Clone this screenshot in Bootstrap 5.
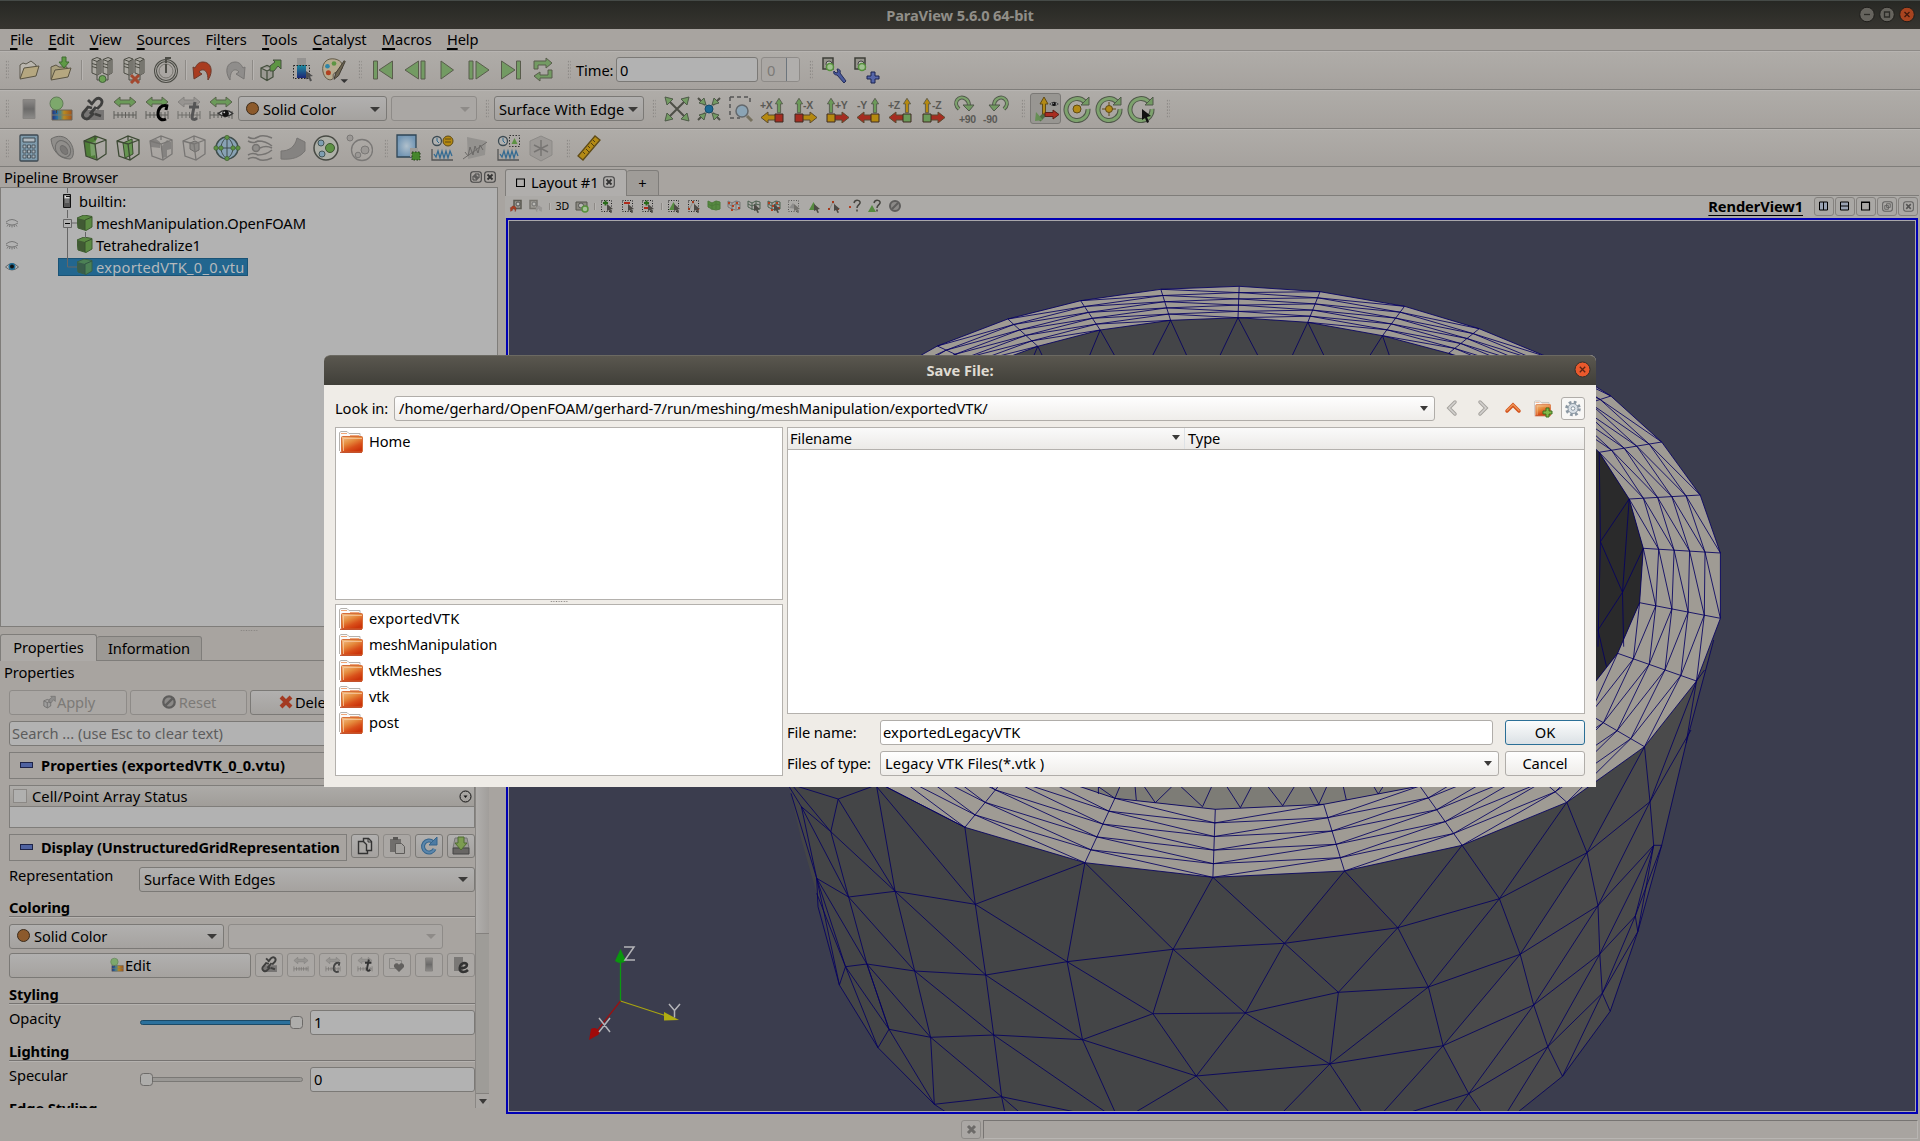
<!DOCTYPE html>
<html lang="en">
<head>
<meta charset="utf-8">
<title>ParaView 5.6.0 64-bit</title>
<link rel="stylesheet" href="https://cdn.jsdelivr.net/npm/bootstrap@5.3.0/dist/css/bootstrap.min.css">
<script src="https://cdn.jsdelivr.net/npm/bootstrap@5.3.0/dist/js/bootstrap.bundle.min.js"></script>
<style>
:root{--bg:#a8a4a0;--ln:#7f7d7a;--base:#b2b2b2}
html,body{width:1920px;height:1141px;overflow:hidden}
body{font:14.67px/20px "Noto Sans","Open Sans",sans-serif;letter-spacing:-.08px;color:#000;background:var(--bg);white-space:nowrap}
svg{display:block;flex:none}
b,.fb{font-weight:700;letter-spacing:-.1px}
.titlebar{height:29px;background:linear-gradient(#272824,#373530);border-top:1px solid #454a47;color:#908e88;font-weight:700;letter-spacing:-.13px;padding-bottom:1px}
.winbtns{right:5px;top:5px;gap:4px}
.menus{height:22px;padding:0 0 2px 10px;gap:15.3px;border-bottom:1px solid #8d8a87}
.menus u{text-underline-offset:3px;text-decoration-thickness:1.5px}
.tbar{height:39px;padding-bottom:2px;background:linear-gradient(#afaca8,#a6a29e);border-bottom:1px solid var(--ln);border-top:1px solid #b7b4b1}
.r3{padding-bottom:0}
.cell{width:32px;display:flex;justify-content:center;align-items:center;flex:none}
.r3 .cell{width:33.05px}
.ic{width:28px;height:28px}
.grip{width:4px;height:19px;flex:none;background-image:radial-gradient(circle,#85827f 0.7px,transparent .9px);background-size:2.6px 3.2px}
.vsep{width:1px;height:20px;background:#8d8a86;box-shadow:1px 0 #b8b5b2;flex:none}
.ctl{height:25px;border:1px solid #7b7976;border-radius:3px;background:linear-gradient(#b1b0af,#a5a29f);display:flex;align-items:center;flex:none;overflow:hidden}
.ctl.off{border-color:#8e8b88;color:#7c7a77;background:#aaa7a4}
.fld{background:var(--base)}
.dock .ctl,.dlg .ctl{padding-bottom:2px}
.dock .ctl.sq{padding-bottom:0}
.arr{border:5px solid transparent;border-top:5px solid #3b3a39;border-bottom:0;width:0;height:0;margin-left:auto;margin-right:6px;flex:none;position:relative;top:1px}
.off .arr{border-top-color:#8e8b88;}
.dot{width:13px;height:13px;border-radius:50%;background:#8c5a2c;border:1px solid #3c2b1a;flex:none}
.dock{width:505px;flex:none}
.treebox{width:498px;height:440px;padding-top:2px;background:var(--base);border:1px solid var(--ln)}
.trow{height:22px;display:flex;align-items:center}
.selrow{background:#22668f;border:1px solid #1a5376;color:#b5b9bc;height:18px;display:flex;align-items:center;letter-spacing:.26px}
.tabx{border:1px solid var(--ln);border-bottom:0;border-radius:3px 3px 0 0;display:flex;align-items:center;padding-bottom:1px}
.props{width:489px;height:356px;overflow:hidden;margin-top:6px}
.pcol{width:466px;margin-left:9px}
.grp{height:27px;border:1px solid var(--ln);display:flex;align-items:center;padding:0 0 1px 10px;overflow:hidden}
.minus{width:13px;height:6px;background:#4f62a0;border:1px solid #1d2347;flex:none;margin-right:8px}
.hline{border-bottom:1px solid #777472;box-shadow:0 1px #b5b2af;height:18px;line-height:17px}
.sq{width:28px;height:24px;justify-content:center}
.sq svg{width:22px;height:22px}
.sb{width:14px;background:#9e9c98;border-left:1px solid #8a8784}
.vt{height:22px;background:#acaaa7}
.vt .vc{width:20.1px;display:flex;justify-content:center;flex:none}
.vt .vc svg{width:14px;height:14px}
.vb{width:20px;height:19px;border:1px solid #85827f;border-radius:3px;display:flex;align-items:center;justify-content:center;background:#aaa8a5}
.view{border:2px solid #0000b4;height:896px}
.view>div{border:1px solid #a9a7aa;height:892px;background:#3b3d4e}
.dlg{position:absolute;left:324px;top:355px;width:1272px;height:432px;background:#efece7;border-radius:6px 6px 0 0}
.dlgt{height:30px;border-radius:6px 6px 0 0;background:linear-gradient(#5a574f,#403f39);border-top:1px solid #6b6962;color:#dfdbd2;font-weight:700;padding-bottom:2px;letter-spacing:-.05px}
.dlg .ctl{border-color:#b0ada9;background:linear-gradient(#fefefe,#efedea)}
.dlg .ctl.fld{background:#fff}
.dlg .ctl.okb{border-color:#2b6f96;background:linear-gradient(#fbfcfc,#dbe1e5)}
.pane{background:#fff;border:1px solid #b4b1ad}
.pane .it{height:26px;display:flex;align-items:center;padding-left:3px;gap:6px}
.it span{padding-bottom:3px}
.thead{height:22px;background:linear-gradient(#fafafa,#eceae7);border-bottom:1px solid #b4b1ad}
.axi text{font:bold 10.500px "Liberation Sans",sans-serif;fill:#5a5955;letter-spacing:-.3px}
</style>
</head>
<body class="d-flex flex-column">
<svg width="0" height="0" class="position-absolute">
<defs>
<linearGradient id="gf" x1="0" y1="0" x2=".6" y2="1"><stop offset="0" stop-color="#f3c48c"/><stop offset=".45" stop-color="#e58a3c"/><stop offset=".75" stop-color="#d9501a"/><stop offset="1" stop-color="#cc350b"/></linearGradient>
<linearGradient id="rb"><stop offset="0" stop-color="#23307e"/><stop offset=".35" stop-color="#2a82a8"/><stop offset=".6" stop-color="#b98a20"/><stop offset="1" stop-color="#a3521c"/></linearGradient>
<linearGradient id="rv" x2="0" y2="1"><stop offset="0" stop-color="#1f8da0"/><stop offset="1" stop-color="#1b2675"/></linearGradient>
<linearGradient id="gy" x2="0" y2="1"><stop offset="0" stop-color="#8d8b89"/><stop offset=".5" stop-color="#6b6a69"/><stop offset="1" stop-color="#8d8b89"/></linearGradient>
<radialGradient id="bl"><stop offset="0" stop-color="#b0c0cc"/><stop offset="1" stop-color="#7396b4"/></radialGradient>
<symbol id="open" viewBox="0 0 28 28"><path d="M5 22V9l3-2 3 1 5-3 5 4v3" fill="#bab6ae" stroke="#5a574c"/><path d="M5 23 9 12l15-2-3 10z" fill="#b5a780" stroke="#5a5442"/></symbol>
<symbol id="save" viewBox="0 0 28 28"><path d="M4 23V11l5-2 3 2h8v3" fill="#a9a07e" stroke="#5a5442"/><path d="M4 24 8 14l16-2-3 9z" fill="#b5a780" stroke="#5a5442"/><path d="M15 1h4v5h3l-5 6-5-6h3z" fill="#5f9a45" stroke="#3f6a30"/></symbol>
<symbol id="srv" viewBox="0 0 28 28"><path d="M4 3.500l5-2 4 1.500v14l-4 2-5-2zM15 3.500l5-2 4 1.500v14l-4 2-5-2z" fill="#aba9a2" stroke="#4c4c44"/><path d="M9 5.500v13M20 5.500v13" stroke="#4c4c44"/><path d="M9 5.500l4-2.500v14l-4 2zM20 5.500l4-2.500v14l-4 2z" fill="#77766f"/><path d="M4 7.500l5 1.500M4 10.500l5 1.500M15 7.500l5 1.500M15 10.500l5 1.500M9 19v5h11v-5M4 3.500l5 2 4-2.500M15 3.500l5 2 4-2.500" fill="none" stroke="#4c4c44"/></symbol>
<symbol id="conn" viewBox="0 0 28 28"><use href="#srv"/><circle cx="14.500" cy="23" r="3.500" fill="#6ba152" stroke="#41603a"/></symbol>
<symbol id="disc" viewBox="0 0 28 28"><use href="#srv"/><path d="M11 19l8 8M19 19l-8 8" stroke="#a3482f" stroke-width="3"/></symbol>
<symbol id="auto" viewBox="0 0 28 28" fill="none" stroke="#4d4d47"><circle cx="14" cy="15" r="10.500" stroke-width="3"/><circle cx="14" cy="15" r="10.500" stroke="#a9a7a2"/><circle cx="14" cy="15" r="7" stroke="#77756f"/><path d="M14 17V8M14 1v6M14 2h5" stroke-width="2"/></symbol>
<symbol id="undo" viewBox="0 0 28 28"><path d="M4 11l1 12 8-5-3-2c3-4 9-3 9 8 6-9 3-18-5-18-4 0-6 2-8 6z" fill="#a93c20" stroke="#6d3a2c"/></symbol>
<symbol id="redo" viewBox="0 0 28 28"><path d="M24 11l-1 12-8-5 3-2c-3-4-9-3-9 8-6-9-3-18 5-18 4 0 6 2 8 6z" fill="#8f8d8b" stroke="#787674"/></symbol>
<symbol id="apply" viewBox="0 0 28 28"><path d="M5 12l6-2.500 6 2.500v9l-6 3.500L5 21zM5 12l6 3 6-3M11 15v9" fill="#9a9992" stroke="#45503e" stroke-width="1.300"/><path d="M14 15V10l5-4-2-2h8v9l-3-3-4 5z" fill="#5d9543" stroke="#45503e"/></symbol>
<symbol id="pick" viewBox="0 0 28 28"><path d="M9 2h9v7H9z" fill="#959391"/><path d="M9 9h9v13H9z" fill="url(#rv)"/><path d="M5.500 9.500h16v13h-16z" fill="none" stroke="#222" stroke-dasharray="1.500 1.500"/><path d="M18 15l7 5-3 .5 2 4-2 1-1.500-4-2.500 2z" fill="#505050"/></symbol>
<symbol id="pal" viewBox="0 0 30 28"><path d="M13 2C6 2 2 8 3 15s6 11 10 9c3-2-1-5 3-7s8-2 8-7-5-8-11-8z" fill="#b7ab90" stroke="#5a5340"/><circle cx="8" cy="10" r="2.500" fill="#2e86a8"/><circle cx="15" cy="7" r="2.500" fill="#5d9543"/><circle cx="9" cy="17" r="2.700" fill="#b1401f"/><path d="M26 4 17 17l-2 7 5-4 7-15z" fill="#6d6450" stroke="#3c382f"/><path d="M22 24h8l-4 4z" fill="#333"/></symbol>
<symbol id="first" viewBox="0 0 28 28"><g fill="#739b63" stroke="#595c4c"><path d="M4.500 5h4v18h-4zM23.500 5v18L10 14z"/></g></symbol>
<symbol id="prev" viewBox="0 0 28 28"><g fill="#739b63" stroke="#595c4c"><path d="M20 5h4v18h-4zM17.500 5v18L4 14z"/></g></symbol>
<symbol id="play" viewBox="0 0 28 28"><path d="M8 5v18l12.500-9z" fill="#739b63" stroke="#595c4c"/></symbol>
<symbol id="next" viewBox="0 0 28 28"><g fill="#739b63" stroke="#595c4c"><path d="M4 5h4v18H4zM11 5v18l13-9z"/></g></symbol>
<symbol id="last" viewBox="0 0 28 28"><g fill="#739b63" stroke="#595c4c"><path d="M19.500 5h4v18h-4zM4.500 5v18L18 14z"/></g></symbol>
<symbol id="loop" viewBox="0 0 28 28"><path d="M5 13V5h12V2l6 5-6 5V9H9v4zM23 14v8H11v3l-6-5 6-4v3h8v-5z" fill="#739b63" stroke="#595c4c"/></symbol>
<symbol id="cam" viewBox="0 0 28 28"><path d="M3 2h10v11H3z" fill="#96948c" stroke="#3e3f38" stroke-width="1.500"/><circle cx="9" cy="8" r="3" fill="#c0c0bb" stroke="#444"/><circle cx="10" cy="11" r="3.500" fill="#9fc090" stroke="#56903c" stroke-width="1.500"/></symbol>
<symbol id="camw" viewBox="0 0 28 28"><use href="#cam"/><path d="M14 15c-1 3 1 4 3 4l7 8 2-2-6-8c1-3-1-4-3-4l1 3-2 1z" fill="#4a5a9c" stroke="#242c58"/></symbol>
<symbol id="camp" viewBox="0 0 28 28"><use href="#cam"/><path d="M19 16h4v4h4v3h-4v4h-4v-4h-4v-3h4z" fill="#5666a8" stroke="#1b2250"/></symbol>
<symbol id="camg" viewBox="0 0 14 14"><path d="M5 1.500h7v8H5z" fill="#96948c" stroke="#5b5a52" stroke-width="1.500"/><circle cx="9" cy="5" r="2" fill="#c0c0bb" stroke="#555"/></symbol>
<symbol id="bar" viewBox="0 0 28 28"><path d="M8 2.500h12v23H8z" fill="url(#gy)" stroke="#858380"/></symbol>
<symbol id="cmap" viewBox="0 0 28 28"><path d="M5 15h20v10H5z" fill="url(#rb)" stroke="#6a6558"/><path d="M5 20h20M12 15v10" stroke="#807b60"/><circle cx="9.500" cy="8.500" r="6.500" fill="#7da86c" stroke="#5f7c55"/><path d="M9.500 15v3" stroke="#444"/></symbol>
<symbol id="chain" viewBox="0 0 28 28"><path d="M5 15h20v10H5z" fill="#777574"/><path d="M12 10 16 5c4-4 9 0 6 5l-4 4M13 13l-4-1-5 6c-2 5 4 8 7 4l4-4M11 19l6-7M9 5l3 3M16 19l6 2" fill="none" stroke="#3f3f3e" stroke-width="2.800"/></symbol>
<symbol id="rul" viewBox="0 0 28 28"><path d="M3 20h22M3 16v8M7 17v6M11 17v6M14.500 17v6M18 17v6M22 17v6M25 16v8" stroke="#5f5e5a" fill="none"/></symbol>
<symbol id="resc" viewBox="0 0 28 28"><use href="#rul"/><path d="M3 7l6-5v3h10V2l6 5-6 5V9H9v3z" fill="#6b9a59" stroke="#59634c"/></symbol>
<symbol id="rescg" viewBox="0 0 28 28" opacity=".75"><use href="#rul"/><path d="M3 7l6-5v3h10V2l6 5-6 5V9H9v3z" fill="#908e8b" stroke="#777573"/></symbol>
<symbol id="cC" viewBox="0 0 28 28"><path d="M25 11c-7-2-10 3-10 8s4 7 8 5M24 10l-1 5" fill="none" stroke="currentColor" stroke-width="3"/></symbol>
<symbol id="cT" viewBox="0 0 28 28"><path d="M20 7l-3 15c0 3 3 3 5 1M14 12h10" fill="none" stroke="currentColor" stroke-width="3"/></symbol>
<symbol id="eye" viewBox="0 0 28 28"><path d="M2 14q12-10 24 0-12 9-24 0z" fill="#b8b8b8" stroke="#333" stroke-width="2"/><circle cx="14" cy="14" r="5.500" fill="#111"/><circle cx="12" cy="12" r="1.500" fill="#ccc"/></symbol>
<symbol id="fit" viewBox="0 0 28 28"><path d="M5 5l18 18M23 5 5 23" stroke="#4e4f47" stroke-width="2"/><path d="M2 2l8 2-6 6zM26 2l-8 2 6 6zM2 26l8-2-6-6zM26 26l-8-2 6-6z" fill="#739b63" stroke="#4e5a48"/></symbol>
<symbol id="fitd" viewBox="0 0 28 28"><path d="M3 3l7 7M25 3l-7 7M3 25l7-7M25 25l-7-7" stroke="#4e4f47" stroke-width="2"/><path d="M11 10l-7-2 5-5zM17 10l7-2-5-5zM11 18l-7 2 5 5zM17 18l7 2-5 5z" fill="#739b63" stroke="#4e5a48"/><circle cx="14" cy="14" r="4" fill="#1c6a96" stroke="#154b69"/></symbol>
<symbol id="zoomb" viewBox="0 0 28 28"><path d="M3 2v21h10M3 2h20v8" fill="none" stroke="#555" stroke-width="1.500" stroke-dasharray="4 3"/><circle cx="15" cy="16" r="6" fill="#8ba4b5" stroke="#63686c" stroke-width="1.500"/><path d="M20 21l5 5" stroke="#77715f" stroke-width="3"/></symbol>
<symbol id="arU" viewBox="0 0 10 20"><path d="M3 19V8H.5L5 1l4.500 7H7v11z" fill="currentColor" stroke="#4f5147"/></symbol>
<symbol id="axL" viewBox="0 0 28 28"><use href="#arU" x="16" y="1" width="8" height="19" style="color:var(--u)"/><path d="M17 20H9v-3l-7 5.500L9 28v-3h8z" fill="var(--h)" stroke="#5b4a30"/><path d="M16 19h8v8h-8z" fill="var(--q)" stroke="#3e2b20"/></symbol>
<symbol id="axR" viewBox="0 0 28 28"><use href="#arU" x="4" y="1" width="8" height="19" style="color:var(--u)"/><path d="M11 20h8v-3l7 5.500-7 5.500v-3h-8z" fill="var(--h)" stroke="#5b4a30"/><path d="M4 19h8v8H4z" fill="var(--q)" stroke="#3e2b20"/></symbol>
<symbol id="rotp" viewBox="0 0 28 28"><path d="M8 14C1 8 8-1 15 4c3 2 3 4 3 7" fill="none" stroke="#50584a" stroke-width="4"/><path d="M8 14C1 8 8-1 15 4c3 2 3 4 3 7" fill="none" stroke="#7da26d" stroke-width="2.200"/><path d="M12 10h11l-5 6z" fill="#739b63" stroke="#50584a"/></symbol>
<symbol id="calc" viewBox="0 0 28 28"><rect x="5" y="1" width="18" height="26" rx="1" fill="#7f9bac" stroke="#3f4a52" stroke-width="1.300"/><path d="M8 4h12v4H8z" fill="#b2bac0" stroke="#3f4a52"/><path d="M8 11h3v3H8zM12.500 11h3v3h-3zM17 11h3v3h-3zM8 16h3v3H8zM12.500 16h3v3h-3zM17 16h3v3h-3zM8 21h3v3H8zM12.500 21h3v3h-3zM17 21h3v3h-3z" fill="#a9b4bb" stroke="#3f4a52" stroke-width=".8"/></symbol>
<symbol id="cont" viewBox="0 0 28 28" fill="none" stroke="#6d6c6a"><path d="M3 5c6-4 14-4 19 3s4 16 0 17C10 25 4 15 3 5z" fill="#908e8b"/><ellipse cx="15" cy="15" rx="7" ry="9" transform="rotate(-35 15 15)"/><ellipse cx="16" cy="16" rx="3" ry="5" fill="#7a7876" transform="rotate(-35 16 16)"/></symbol>
<symbol id="cube" viewBox="0 0 28 28"><path d="M3 7l11-5 11 4v14l-9 6L5 22zM3 7l11 3 11-4M16 26l-2-16M14 2v4" fill="none" stroke="currentColor" stroke-width="1.300"/></symbol>
<symbol id="clip" viewBox="0 0 28 28"><path d="M3 7l11-5 3 1-4 7 2 15-10-3z" fill="#4f7f38"/><path d="M9 9l6-2v14l-5 1z" fill="#789f68"/><use href="#cube" color="#3d4a34"/></symbol>
<symbol id="slice" viewBox="0 0 28 28"><path d="M9 9l9-4 1 15-8 4z" fill="#669551" stroke="#38502c"/><use href="#cube" color="#3d4a34"/></symbol>
<symbol id="thr" viewBox="0 0 28 28"><path d="M3 7l6-2 4 3v6l-9-1zM15 12l5-6 4 2v7l-4 1v7l-5 1z" fill="#858381"/><use href="#cube" color="#787674"/></symbol>
<symbol id="ext" viewBox="0 0 28 28"><path d="M10 9l5-2 4 2v7l-4 2-5-3z" fill="#8e8c89" stroke="#6e6c6a"/><use href="#cube" color="#787674"/></symbol>
<symbol id="globe" viewBox="0 0 28 28"><circle cx="14" cy="14" r="11" fill="#88a2b4" stroke="#3f4d4c" stroke-width="1.500"/><path d="M3 14h22M14 3v22M14 3c-8 6-8 16 0 22M14 3c8 6 8 16 0 22" fill="none" stroke="#3f4d4c"/><g fill="#5c9143" stroke="#3d5630" stroke-width=".6"><circle cx="14" cy="3.500" r="2.200"/><circle cx="14" cy="24.500" r="2.200"/><circle cx="3" cy="14" r="2.200"/><circle cx="25" cy="14" r="2.200"/><circle cx="8" cy="14" r="2.200"/><circle cx="20" cy="14" r="2.200"/></g></symbol>
<symbol id="strm" viewBox="0 0 28 28" fill="none" stroke="#757371" stroke-width="1.500"><path d="M2 3q5 3 10 0t14 1M2 7q5 3 10 0 8 0 14 5M2 21q5-3 10 0 8 0 14-5M2 25q5-3 10 0t14-1M14 14q6-3 12 0"/><circle cx="10" cy="14" r="3.500" fill="#908e8b"/></symbol>
<symbol id="warp" viewBox="0 0 28 28"><path d="M2 17c8 0 14-4 16-13l8 4v9c-5 6-12 9-24 8z" fill="#858381" stroke="#777573"/></symbol>
<symbol id="group" viewBox="0 0 28 28"><circle cx="14" cy="14" r="12" fill="#aeb0a8" stroke="#484a44" stroke-width="1.500"/><circle cx="9" cy="9" r="3" fill="#7f9fb2" stroke="#455"/><circle cx="18" cy="14" r="4.500" fill="#5c9143" stroke="#3d5630"/><circle cx="10" cy="20" r="3" fill="#7f9fb2" stroke="#455"/></symbol>
<symbol id="exlv" viewBox="0 0 28 28" fill="#9b9895" stroke="#7a7876"><circle cx="5" cy="4" r="3"/><circle cx="17" cy="16" r="10.500" fill="none" stroke-width="1.300"/><circle cx="20" cy="16" r="4"/><circle cx="13" cy="21" r="2.800"/></symbol>
<symbol id="sel" viewBox="0 0 28 28"><path d="M2 1h19v22H2z" fill="url(#bl)" stroke="#2f4656" stroke-width="1.300"/><path d="M15 14h8v9h-8z" fill="#9d9b97"/><path d="M17 18h8v8h-8z" fill="#46862c" stroke="#223a18" stroke-dasharray="1.500 1.500"/></symbol>
<symbol id="plot" viewBox="0 0 28 28"><path d="M4 15v11h21" fill="none" stroke="#555" stroke-width="1.300"/><path d="M6 20l2 3 2-6 2 7 2-7 2 7 2-7 2 7 2-7 2 5" fill="none" stroke="#356b92" stroke-width="1.300"/><circle cx="9" cy="7" r="4.500" fill="#b1b1b0" stroke="#3c4a52" stroke-width="1.300"/><path d="M9 4v3l2 2" stroke="#2d6a90" fill="none"/></symbol>
<symbol id="pt1" viewBox="0 0 28 28"><use href="#plot"/><circle cx="20" cy="7" r="5" fill="#b58910" stroke="#5e4a15"/><path d="M17 5h6M17 8h6" stroke="#5e4a15"/></symbol>
<symbol id="pt2" viewBox="0 0 28 28"><use href="#plot"/><path d="M15.500 1.500h10v11h-10z" fill="none" stroke="#333" stroke-dasharray="1.500 1.500"/><path d="M20.500 4l3 6h-6z" fill="#5c9143"/></symbol>
<symbol id="pov" viewBox="0 0 28 28"><path d="M6 3l19 4-1 14-17 4z" fill="#94928f"/><path d="M2 25 26 8M4 18l3 4 2-9 3 8 2-9 3 7 2-8 3 5" fill="none" stroke="#6c6a68"/></symbol>
<symbol id="prb" viewBox="0 0 28 28"><path d="M3 7l11-5 11 5v14l-11 6L3 21z" fill="#9c9996" stroke="#8c8a87"/><path d="M14 6v16M7 18l14-7M7 11l14 7" stroke="#777573" stroke-width="1.500"/></symbol>
<symbol id="ruler" viewBox="0 0 28 28"><path d="M3 22 20 2l5 4L8 26z" fill="#b38a15" stroke="#5f4b17" stroke-width="1.300"/><path d="M8 18l2 2M11 15l3 3M13 12l2 2M16 9l3 3M18 6l2 2" stroke="#4d3d12"/></symbol>
<symbol id="axis" viewBox="0 0 28 28"><path d="M13 19 7 25" stroke="#4e6d43" stroke-width="4"/><path d="M3 26l1-9 7 8z" fill="#668f55"/><path d="M10.500 19V9H8l4-7 4 7h-2.500v10z" fill="#b38a15" stroke="#5f4b17"/><path d="M13 17.500h8V15l6 4.500-6 4.500v-2.500h-8z" fill="#a92c20" stroke="#5a2018"/><use href="#eye" x="17" y="4" width="10" height="10"/></symbol>
<symbol id="rc" viewBox="0 0 28 28"><path d="M22 7A11 11 0 1 0 25 14" fill="none" stroke="#50584a" stroke-width="5"/><path d="M22 7A11 11 0 1 0 25 14" fill="none" stroke="#7da26d" stroke-width="3"/><path d="M18 10h8V2z" fill="#739b63" stroke="#50584a"/></symbol>
<symbol id="rc1" viewBox="0 0 28 28"><use href="#rc"/><circle cx="14" cy="14" r="4" fill="#b38a15" stroke="#5f4b17"/></symbol>
<symbol id="rc2" viewBox="0 0 28 28"><use href="#rc"/><path d="M14 7v14M7 14h14" stroke="#5f4b17"/><circle cx="14" cy="14" r="3.500" fill="#b38a15" stroke="#5f4b17"/></symbol>
<symbol id="rc3" viewBox="0 0 28 28"><use href="#rc"/><path d="M15 14l9 7-4 1 2 5-2 1-2-5-3 2z" fill="#111"/></symbol>
<symbol id="folder" viewBox="0 0 24 22"><path d="M.5 20V1.500L2 .5h6l2 2h11V6" fill="#fbfbfb" stroke="#b5b2ae"/><path d="M2 2.500h6M11 4.500h9" stroke="#efa678"/><rect x="2.500" y="5.500" width="21" height="15.500" rx="1" fill="url(#gf)" stroke="#d66d3a"/><path d="M4.500 20V7.500H23" fill="none" stroke="#f7c79f" opacity=".8"/><path d="M1 21.300h22" stroke="#b93a12"/></symbol>
<symbol id="gcube" viewBox="0 0 16 16"><path d="M0 3l7-3 8 1.500V12l-6 3.500L1 13z" fill="#5b8a42" stroke="#3f5e31"/><path d="M0 3l8 2v10L1 13z" fill="#415a34"/><path d="M8 5l7-3M8 5v10" stroke="#38502c"/></symbol>
<symbol id="shut" viewBox="0 0 14 10" fill="none" stroke="#777"><path d="M1 4q6-5 12 0M1 5q6 4 12 0M3 7l-1 1.500M7 7v2.500M11 7l1 1.500M5 7l-.5 2M9 7l.5 2"/></symbol>
<symbol id="srvr" viewBox="0 0 8 14"><path d="M.5.500h7v13h-7z" fill="#555" stroke="#111"/><path d="M1.500 1.500h5v3h-5z" fill="#ddd"/><path d="M3 2h4v1H3z" fill="#111"/><path d="M2 6h4M2 8h4" stroke="#999"/></symbol>
<symbol id="undk" viewBox="0 0 12 12"><rect x=".7" y=".7" width="10.600" height="10.600" rx="2.500" fill="none" stroke="#444" stroke-width="1.100"/><path d="M5 3h4v4H5zM3 5h4v4H3z" fill="none" stroke="#444"/></symbol>
<symbol id="clsx" viewBox="0 0 12 12"><rect x=".7" y=".7" width="10.600" height="10.600" rx="2.500" fill="none" stroke="#444" stroke-width="1.100"/><path d="M3.500 3.500l5 5M8.500 3.500l-5 5" stroke="#333" stroke-width="1.800"/></symbol>
<symbol id="dsel" viewBox="0 0 14 14"><path d="M1.500 1.500h10v11h-10z" fill="none" stroke="#222" stroke-dasharray="1 1.500"/></symbol>
<symbol id="ptr" viewBox="0 0 14 14"><path d="M7 5l6 5-2.500.5 1.500 3-1.500.5-1.500-3-2 1z" fill="#4c4a45"/></symbol>
<symbol id="tri" viewBox="0 0 14 14"><path d="M6.500 3l4.500 8H2z" fill="#568a40"/></symbol>
<symbol id="tdots" viewBox="0 0 14 14"><path d="M2 11l4-8 5 8" stroke="#8b8986" fill="none"/><path d="M5 2h2v2H5zM1 9h2v2H1zM10 9h2v2h-2z" fill="#a33a1c"/></symbol>
<symbol id="msh" viewBox="0 0 14 14"><path d="M1 2l4 2 4-2 4 1v7l-4 1-4-1-4-2zM5 4v7M9 2v8M1 5l4 2 4-2 4 1" fill="none" stroke="currentColor"/></symbol>
<symbol id="rdots" viewBox="0 0 14 14"><path d="M1 3h2v2H1zM5 6h2v2H5zM9 3h2v2H9zM4 10h2v2H4zM11 8h2v2h-2z" fill="#b33f20"/></symbol>
<symbol id="noe" viewBox="0 0 14 14"><circle cx="7" cy="7" r="5" fill="#8c8a88" stroke="#5e5d5c" stroke-width="2"/><path d="M4 10l6-6" stroke="#5e5d5c" stroke-width="2"/></symbol>
<symbol id="qm" viewBox="0 0 14 14"><path d="M6 4c1-4 7-3 6 0-.5 2-3 2-3 5M9 10.500v2" fill="none" stroke="#45443f" stroke-width="1.500"/></symbol>
<symbol id="copy" viewBox="0 0 22 22"><path d="M4.500 6.500h6l3 3v9h-9z" fill="#a9a7a4" stroke="#333" stroke-width="1.400"/><path d="M9.500 3.500h5l3 3v9h-5v-6l-3-3z" fill="#b1afad" stroke="#333" stroke-width="1.400"/><path d="M14 3v4h4" fill="none" stroke="#333"/></symbol>
<symbol id="paste" viewBox="0 0 22 22"><path d="M4 4h11v13H4z" fill="#706e6c"/><path d="M7 2h5v3H7z" fill="#585654"/><path d="M9.500 8.500h6l3 3v7h-9z" fill="#a5a3a0" stroke="#5e5c5a"/></symbol>
<symbol id="rel" viewBox="0 0 22 22"><path d="M15 7A6 6 0 1 0 16.500 14" fill="none" stroke="#34648c" stroke-width="4"/><path d="M15 7A6 6 0 1 0 16.500 14" fill="none" stroke="#5b86ab" stroke-width="2"/><path d="M11 10h8V2z" fill="#4d7ba3" stroke="#34648c"/></symbol>
<symbol id="dl" viewBox="0 0 22 22"><path d="M5 3h12l2 10H3z" fill="#9b9996" stroke="#777"/><path d="M3 13h16v6H3z" fill="#686664" stroke="#444"/><path d="M8 2h6v6h3l-6 7-6-7h3z" fill="#7c9c50" stroke="#4e6a32"/></symbol>
</defs>
</svg>

<header class="titlebar position-relative d-flex align-items-center justify-content-center flex-shrink-0">
  <span>ParaView 5.6.0 64-bit</span>
  <div class="winbtns position-absolute d-flex">
    <svg width="16" height="17"><circle cx="8" cy="8.500" r="7.300" fill="#66645e" stroke="#1e1d1a"/><path d="M5 8.500h6" stroke="#2c2b27" stroke-width="1.300"/></svg>
    <svg width="16" height="17"><circle cx="8" cy="8.500" r="7.300" fill="#66645e" stroke="#1e1d1a"/><path d="M5.500 6h5v5h-5z" fill="none" stroke="#2c2b27" stroke-width="1.300"/></svg>
    <svg width="16" height="17"><circle cx="8" cy="8.500" r="7.300" fill="#a8431f" stroke="#1e1d1a"/><path d="M5.500 6l5 5M10.500 6l-5 5" stroke="#3f180c" stroke-width="1.300"/></svg>
  </div>
</header>
<nav class="menus d-flex align-items-center flex-shrink-0">
  <span><u>F</u>ile</span><span><u>E</u>dit</span><span><u>V</u>iew</span><span><u>S</u>ources</span><span>Fi<u>l</u>ters</span><span><u>T</u>ools</span><span><u>C</u>atalyst</span><span><u>M</u>acros</span><span><u>H</u>elp</span>
</nav>

<div class="tbar d-flex align-items-center flex-shrink-0">
  <i class="grip" style="margin:0 4px 0 5px"></i>
  <span class="cell"><svg class="ic"><use href="#open"/></svg></span><span class="cell"><svg class="ic"><use href="#save"/></svg></span>
  <i class="vsep mx-1"></i>
  <span class="cell"><svg class="ic"><use href="#conn"/></svg></span><span class="cell"><svg class="ic"><use href="#disc"/></svg></span><span class="cell"><svg class="ic"><use href="#auto"/></svg></span>
  <i class="vsep" style="margin:0 1px 0 3px"></i>
  <span class="cell"><svg class="ic"><use href="#undo"/></svg></span><span class="cell"><svg class="ic"><use href="#redo"/></svg></span>
  <i class="vsep" style="margin:0 1px"></i>
  <span class="cell"><svg class="ic"><use href="#apply"/></svg></span><span class="cell"><svg class="ic"><use href="#pick"/></svg></span><span class="cell"><svg class="ic"><use href="#pal"/></svg></span>
  <i class="grip" style="margin:0 5px 0 8px"></i>
  <span class="cell"><svg class="ic"><use href="#first"/></svg></span><span class="cell"><svg class="ic"><use href="#prev"/></svg></span><span class="cell"><svg class="ic"><use href="#play"/></svg></span><span class="cell"><svg class="ic"><use href="#next"/></svg></span><span class="cell"><svg class="ic"><use href="#last"/></svg></span><span class="cell"><svg class="ic"><use href="#loop"/></svg></span>
  <i class="grip" style="margin:0 5px 0 8px"></i>
  <span style="width:40px">Time:</span>
  <span class="ctl fld" style="width:142px;padding-left:3px">0</span>
  <span class="ctl off" style="width:39px;margin-left:3px"><span style="width:24px;padding-left:5px">0</span><span class="h-100 border-start border-secondary flex-fill" style="background:#b0aeac"></span></span>
  <i class="grip" style="margin:0 5px 0 9px"></i>
  <span class="cell"><svg class="ic"><use href="#camw"/></svg></span><span class="cell"><svg class="ic"><use href="#camp"/></svg></span>
</div>

<div class="tbar d-flex align-items-center flex-shrink-0">
  <i class="grip" style="margin:0 4px 0 5px"></i>
  <span class="cell"><svg class="ic" viewBox="0 -3 28 34" preserveAspectRatio="none"><use href="#bar" width="28" height="28"/></svg></span><span class="cell"><svg class="ic"><use href="#cmap"/></svg></span><span class="cell"><svg class="ic"><use href="#chain"/></svg></span><span class="cell"><svg class="ic"><use href="#resc"/></svg></span>
  <span class="cell"><svg class="ic"><use href="#resc"/><use href="#cC"/></svg></span>
  <span class="cell"><svg class="ic" color="#555"><use href="#rescg"/><use href="#cT"/></svg></span>
  <span class="cell"><svg class="ic"><use href="#resc"/><use href="#eye" x="10" y="10" width="17" height="17"/></svg></span>
  <span class="ctl" style="width:149px;margin-left:1px"><i class="dot" style="margin:0 4px 0 7px"></i>Solid Color<i class="arr"></i></span>
  <span class="ctl off" style="width:86px;margin-left:4px"><i class="arr"></i></span>
  <i class="grip" style="margin:0 5px 0 8px"></i>
  <span class="ctl" style="width:150px;padding-left:4px;letter-spacing:-.02px">Surface With Edge<i class="arr" style="margin-right:5px"></i></span>
  <i class="grip" style="margin:0 5px 0 8px"></i>
  <span class="cell"><svg class="ic"><use href="#fit"/></svg></span><span class="cell"><svg class="ic"><use href="#fitd"/></svg></span><span class="cell"><svg class="ic"><use href="#zoomb"/></svg></span>
  <span class="cell"><svg class="ic axi" style="--u:#6b9a59;--h:#b58910;--q:#a52c20"><text x="1" y="14">+X</text><use href="#axL"/></svg></span>
  <span class="cell"><svg class="ic axi" style="--u:#6b9a59;--h:#b58910;--q:#a52c20"><text x="12" y="14">-X</text><use href="#axR"/></svg></span>
  <span class="cell"><svg class="ic axi" style="--u:#6b9a59;--h:#a52c20;--q:#b58910"><text x="12" y="14">+Y</text><use href="#axR"/></svg></span>
  <span class="cell"><svg class="ic axi" style="--u:#6b9a59;--h:#a52c20;--q:#b58910"><text x="2" y="14">-Y</text><use href="#axL"/></svg></span>
  <span class="cell"><svg class="ic axi" style="--u:#b58910;--h:#a52c20;--q:#6b9a59"><text x="1" y="14">+Z</text><use href="#axL"/></svg></span>
  <span class="cell"><svg class="ic axi" style="--u:#b58910;--h:#a52c20;--q:#6b9a59"><text x="13" y="14">-Z</text><use href="#axR"/></svg></span>
  <span class="cell"><svg class="ic axi overflow-visible"><use href="#rotp"/><text x="8" y="28">+90</text></svg></span>
  <span class="cell"><svg class="ic axi overflow-visible"><use href="#rotp" transform="matrix(-1 0 0 1 29 0)"/><text x="0" y="28">-90</text></svg></span>
  <i class="grip" style="margin:0 5px 0 8px"></i>
  <span class="ctl justify-content-center" style="width:31px;height:31px;background:#989692"><svg class="ic"><use href="#axis"/></svg></span>
  <span class="cell"><svg class="ic"><use href="#rc1"/></svg></span><span class="cell"><svg class="ic"><use href="#rc2"/></svg></span><span class="cell"><svg class="ic"><use href="#rc3"/></svg></span>
  <i class="grip" style="margin:0 8px 0 9px"></i>
</div>

<div class="tbar r3 d-flex align-items-center flex-shrink-0" style="height:38px">
  <i class="grip" style="margin:0 3px 0 5px"></i>
  <span class="cell"><svg class="ic"><use href="#calc"/></svg></span><span class="cell"><svg class="ic"><use href="#cont"/></svg></span><span class="cell"><svg class="ic"><use href="#clip"/></svg></span><span class="cell"><svg class="ic"><use href="#slice"/></svg></span><span class="cell"><svg class="ic"><use href="#thr"/></svg></span><span class="cell"><svg class="ic"><use href="#ext"/></svg></span><span class="cell"><svg class="ic"><use href="#globe"/></svg></span><span class="cell"><svg class="ic"><use href="#strm"/></svg></span><span class="cell"><svg class="ic"><use href="#warp"/></svg></span><span class="cell"><svg class="ic"><use href="#group"/></svg></span><span class="cell"><svg class="ic"><use href="#exlv"/></svg></span>
  <i class="grip" style="margin:0 5px 0 8px"></i>
  <span class="cell"><svg class="ic"><use href="#sel"/></svg></span><span class="cell"><svg class="ic"><use href="#pt1"/></svg></span><span class="cell"><svg class="ic"><use href="#pov"/></svg></span><span class="cell"><svg class="ic"><use href="#pt2"/></svg></span><span class="cell"><svg class="ic"><use href="#prb"/></svg></span>
  <i class="grip" style="margin:0 3px 0 8px"></i>
  <span class="cell"><svg class="ic"><use href="#ruler"/></svg></span>
</div>

<main class="d-flex flex-shrink-0" style="height:950px">
  <section class="dock d-flex flex-column">
    <div class="d-flex align-items-center" style="height:20px;padding:0 2px 0 4px;width:498px"><span class="me-auto">Pipeline Browser</span><svg width="12" height="12" style="margin-right:2px"><use href="#undk"/></svg><svg width="12" height="12"><use href="#clsx"/></svg></div>
    <div class="treebox position-relative">
      <svg class="position-absolute" style="left:0;top:0" width="90" height="90" fill="none" stroke="#666"><path d="M66.500 0v5M66.500 22v8M66.500 40v39h10M71 35h5M84.500 44v6"/><path d="M62.500 31.500h8v8h-8z"/><path d="M64 35.500h5" stroke="#000"/></svg>
      <div class="trow" style="padding-left:62px"><svg width="8" height="14" class="me-2"><use href="#srvr"/></svg>builtin:</div>
      <div class="trow" style="padding-left:4px"><svg width="14" height="10"><use href="#shut"/></svg><svg width="16" height="16" style="margin:0 3px 0 58px"><use href="#gcube"/></svg>meshManipulation.OpenFOAM</div>
      <div class="trow" style="padding-left:4px"><svg width="14" height="10"><use href="#shut"/></svg><svg width="16" height="16" style="margin:0 3px 0 58px"><use href="#gcube"/></svg>Tetrahedralize1</div>
      <div class="trow" style="padding-left:4px"><svg width="14" height="12" viewBox="0 0 14 12"><path d="M.5 6q6.500-7 13 0-6.500 6-13 0z" fill="#bbb" stroke="#666"/><circle cx="7" cy="5.500" r="3.500" fill="#1d6b94"/><circle cx="7" cy="5.500" r="2" fill="#111"/></svg><span class="selrow" style="margin-left:39px;width:190px;padding-left:18px"><svg width="16" height="16" style="margin-right:3px" opacity=".75"><use href="#gcube"/></svg>exportedVTK_0_0.vtu</span></div>
    </div>
    <div class="d-flex justify-content-center align-items-center" style="height:7px;width:498px"><i class="grip" style="width:18px;height:3px"></i></div>
    <div class="d-flex align-items-end" style="height:27px;width:498px">
      <span class="tabx px-2" style="width:97px;height:27px;background:#adaaa7;padding-bottom:2px"><span class="mx-auto">Properties</span></span>
      <span class="tabx" style="width:105px;height:25px;background:#9c9995;border-left:0;border-bottom:1px solid var(--ln)"><span class="mx-auto">Information</span></span>
      <span class="flex-fill" style="border-bottom:1px solid var(--ln)"></span>
    </div>
    <div style="height:29px;padding:1px 4px">Properties</div>
    <div class="d-flex" style="padding-left:9px;gap:3px;height:31px">
      <span class="ctl off justify-content-center" style="width:118px"><svg width="16" height="16" viewBox="0 0 28 28" style="filter:grayscale(1);opacity:.7"><use href="#apply"/></svg>Apply</span>
      <span class="ctl off justify-content-center" style="width:117px;gap:2px"><svg width="16" height="16"><use href="#noe"/></svg>Reset</span>
      <span class="ctl justify-content-center" style="width:118px;gap:2px"><svg width="14" height="14" viewBox="0 0 14 14"><path d="M2 2l10 10M12 2 2 12" stroke="#a33a22" stroke-width="4"/></svg>Delete</span>
    </div>
    <span class="ctl fld" style="width:466px;margin-left:9px;padding-left:2px;color:#5c5c5c;letter-spacing:.02px">Search ... (use Esc to clear text)</span>
    <div class="props d-flex">
      <div class="pcol">
        <div class="grp"><i class="minus"></i><b style="letter-spacing:.1px">Properties (exportedVTK_0_0.vtu)</b></div>
        <div style="height:43px;margin:6px 0;border:1px solid var(--ln);background:var(--base)"><div class="d-flex align-items-center" style="height:21px;background:linear-gradient(#adaba8,#a09d99);border-bottom:1px solid var(--ln);padding:0 2px 0 3px"><i style="width:14px;height:14px;border:1px solid #8b8885;background:#b0b0af;margin-right:5px"></i><span class="me-auto" style="letter-spacing:.08px">Cell/Point Array Status</span><svg width="13" height="13" fill="none" stroke="#111"><circle cx="6.500" cy="6.500" r="5.500"/><path d="M4.500 5.500h4l-2 2.500z" fill="#111" stroke="none"/></svg></div></div>
        <div class="d-flex" style="gap:4px;height:33px"><div class="grp" style="width:338px"><i class="minus"></i><b style="letter-spacing:-.13px">Display (UnstructuredGridRepresentation</b></div>
          <span class="ctl sq"><svg><use href="#copy"/></svg></span><span class="ctl sq off"><svg><use href="#paste"/></svg></span><span class="ctl sq"><svg><use href="#rel"/></svg></span><span class="ctl sq"><svg><use href="#dl"/></svg></span></div>
        <div class="d-flex" style="height:32px"><span style="width:130px;line-height:16px">Representation</span><span class="ctl flex-fill" style="padding-left:4px">Surface With Edges<i class="arr"></i></span></div>
        <div class="hline fb">Coloring</div>
        <div class="d-flex" style="margin-top:7px;gap:4px"><span class="ctl" style="width:215px;padding-left:7px;gap:4px"><i class="dot"></i>Solid Color<i class="arr"></i></span><span class="ctl off" style="width:215px"><i class="arr"></i></span></div>
        <div class="d-flex" style="margin-top:4px;gap:4px;height:33px"><span class="ctl justify-content-center" style="width:242px"><svg width="16" height="16"><use href="#cmap"/></svg>Edit</span>
          <span class="ctl off sq"><svg><use href="#chain" x="2" y="1" width="19" height="19"/></svg></span><span class="ctl off sq"><svg><use href="#rescg" x="2" y="2" width="18" height="18"/></svg></span><span class="ctl off sq"><svg color="#444"><use href="#rescg" x="2" y="2" width="18" height="18"/><use href="#cC" x="2" y="2" width="18" height="18"/></svg></span><span class="ctl off sq"><svg color="#333"><use href="#rescg" x="2" y="2" width="18" height="18"/><use href="#cT" x="2" y="1" width="18" height="18"/></svg></span><span class="ctl off sq"><svg><path d="M3.500 4.500h5l1 2h6v8h-12z" fill="none" stroke="#8b8986"/><path d="M13 18l-5-5c-1-4 4-5 5-2 1-3 6-2 5 2z" fill="#62605e"/></svg></span><span class="ctl off sq"><svg><path d="M7.500 4h7v13h-7z" fill="url(#gy)" stroke="#858380"/></svg></span><span class="ctl off sq"><svg><path d="M4 3h9v14H4z" fill="#7a7876"/><path d="M9 14c9 1 10-5 5-5-5 1-6 9-1 9 3 0 4-1 5-2" fill="none" stroke="#333" stroke-width="2.500"/></svg></span></div>
        <div class="hline fb">Styling</div>
        <div class="d-flex" style="height:39px;padding-top:6px"><span style="width:131px;line-height:16px">Opacity</span><svg width="164" height="25" style="margin-right:6px"><rect x=".5" y="10.500" width="160" height="4" rx="2" fill="#2b709c" stroke="#1b4a67"/><rect x="150.500" y="6.500" width="12" height="12" rx="3" fill="#aeadab" stroke="#6c6a68"/></svg><span class="ctl fld flex-fill" style="padding-left:3px">1</span></div>
        <div class="hline fb">Lighting</div>
        <div class="d-flex" style="height:39px;padding-top:6px"><span style="width:131px;line-height:16px">Specular</span><svg width="164" height="25" style="margin-right:6px"><rect x=".5" y="10.500" width="162" height="4" rx="2" fill="#9a9895" stroke="#7a7875"/><rect x=".5" y="6.500" width="12" height="12" rx="3" fill="#aeadab" stroke="#6c6a68"/></svg><span class="ctl fld flex-fill" style="padding-left:3px">0</span></div>
        <div class="fb" style="line-height:17px">Edge Styling</div>
      </div>
      <div class="sb d-flex flex-column"><div style="height:182px;background:linear-gradient(90deg,#b0aeac,#a19e9b);border-bottom:1px solid #84817e"></div><div class="mt-auto d-flex align-items-center justify-content-center" style="height:15px;background:#a9a6a3;border-top:1px solid #84817e"><i class="arr m-0" style="border-width:5px 4.500px 0;top:0"></i></div></div>
    </div>
  </section>

  <section style="width:1414px">
    <div class="d-flex align-items-end" style="height:29px">
      <span class="tabx" style="width:122px;height:27px;background:#b0aeac;padding-left:10px;padding-bottom:2px"><svg width="9" height="9" style="margin-right:6px"><path d="M.5 1h8v7.500h-8zM0 1h9" fill="none" stroke="#000" stroke-width="1.200"/></svg>Layout #1<svg width="12" height="12" style="margin-left:4px"><use href="#clsx"/></svg></span>
      <span class="tabx justify-content-center" style="width:32px;height:26px;background:#9f9c98;border-left:0;border-bottom:1px solid var(--ln)">+</span>
      <span class="flex-fill" style="border-bottom:1px solid var(--ln)"></span>
    </div>
    <div class="vt d-flex align-items-center" style="padding:0 1px 2px 1px">
      <span class="vc"><svg><use href="#camg"/><use href="#undo" x="0" y="5" width="9" height="9"/></svg></span><span class="vc"><svg opacity=".65"><use href="#camg" x="-4"/><use href="#redo" x="5" y="5" width="9" height="9"/></svg></span><i class="vsep" style="height:7px;margin:0 2px 0 3px"></i>
      <span class="vc" style="font-size:10.500px;letter-spacing:0">3D</span><span class="vc"><svg><path d="M1 3h11v8H1z" fill="#8b8981" stroke="#55544c"/><circle cx="6" cy="6.500" r="2.500" fill="#b5b5b0" stroke="#555"/><circle cx="10" cy="10" r="3" fill="#a4c197" stroke="#56903c" stroke-width="1.500"/></svg></span><i class="vsep" style="height:7px;margin:0 2px"></i>
      <span class="vc"><svg><use href="#dsel"/><path d="M3 4h5M5.500 1.500v5" stroke="#2a6a1a" stroke-width="2"/><use href="#ptr"/></svg></span><span class="vc"><svg><use href="#dsel"/><path d="M3 4h6" stroke="#b02a1a" stroke-width="2"/><use href="#ptr"/></svg></span><span class="vc"><svg><use href="#dsel"/><path d="M3 4h5M5.500 1.500v5" stroke="#2a6a1a" stroke-width="2"/><path d="M3 9h6" stroke="#b02a1a" stroke-width="2"/><use href="#ptr"/></svg></span><i class="vsep" style="height:7px;margin:0 2px 0 3px"></i>
      <span class="vc"><svg><use href="#dsel"/><use href="#tri"/><use href="#ptr"/></svg></span><span class="vc"><svg><use href="#dsel"/><use href="#tdots"/><use href="#ptr"/></svg></span>
      <span class="vc"><svg color="#4d7a3a"><path d="M1 2l4 2 4-2 4 1v7l-4 1-4-1-4-2z" fill="#568a40"/><use href="#msh"/></svg></span><span class="vc"><svg color="#777"><use href="#msh"/><use href="#rdots"/></svg></span><span class="vc"><svg color="#4d6050"><use href="#msh"/><use href="#ptr"/></svg></span><span class="vc"><svg color="#4d6050"><use href="#msh"/><use href="#rdots"/><use href="#ptr"/></svg></span>
      <span class="vc"><svg opacity=".6"><use href="#dsel"/><path d="M2 9l4-5 4 6z" fill="#777"/><use href="#ptr"/></svg></span><span class="vc"><svg><use href="#tri"/><use href="#ptr"/></svg></span><span class="vc"><svg><use href="#tdots"/><use href="#ptr"/></svg></span><span class="vc"><svg><path d="M1 7h2v2H1z" fill="#b33f20"/><use href="#qm"/></svg></span><span class="vc"><svg><path d="M4 6l4 7H0z" fill="#568a40"/><use href="#qm"/></svg></span><span class="vc"><svg><use href="#noe"/></svg></span>
      <b class="ms-auto text-decoration-underline" style="margin-right:11px;text-underline-offset:3px">RenderView1</b>
      <div class="d-flex" style="gap:1px">
        <span class="vb"><svg width="10" height="10"><path d="M.5 1h8v8h-8zM4.500 1v8" fill="#9aa3b4" stroke="#000"/></svg></span><span class="vb"><svg width="10" height="10"><path d="M.5 1h8v8h-8zM.5 5h8" fill="#9aa3b4" stroke="#000"/></svg></span><span class="vb"><svg width="10" height="10"><path d="M.5 1.500h8v7.500h-8zM0 1h9" fill="none" stroke="#000" stroke-width="1.200"/></svg></span><span class="vb"><svg width="11" height="11" opacity=".7"><use href="#undk"/></svg></span><span class="vb"><svg width="11" height="11" opacity=".7"><use href="#clsx"/></svg></span>
      </div>
    </div>
    <div class="view" style="margin:0 1px"><div><svg id="mesh" width="1406" height="890" viewBox="509 221 1406 890"></svg></div></div>
  </section>
</main>

<footer class="d-flex align-items-center flex-fill" style="padding:0 2px 0 961px;gap:2px">
  <span class="ctl off justify-content-center" style="width:20px;height:19px"><svg width="11" height="11"><path d="M2 2l7 7M9 2 2 9" stroke="#6c6a68" stroke-width="3"/></svg></span>
  <span class="flex-fill" style="height:19px;border:1px solid #777472;border-right-color:#b8b5b2;border-bottom-color:#b8b5b2"></span>
</footer>

<div class="dlg d-flex flex-column">
  <div class="dlgt position-relative d-flex align-items-center justify-content-center flex-shrink-0">Save File:
    <svg class="position-absolute" style="right:5px;top:5px" width="17" height="17"><circle cx="8.500" cy="8.500" r="7.500" fill="#e9592c" stroke="#33302b"/><path d="M5.800 5.800l5.400 5.400M11.200 5.800l-5.400 5.400" stroke="#5b2413" stroke-width="1.300"/></svg></div>
  <div class="d-flex align-items-center" style="padding:11px 11px 0;height:36px">
    <span style="width:59px;padding-bottom:2px">Look in:</span>
    <span class="ctl" style="width:1041px;padding-left:4px;letter-spacing:-.07px">/home/gerhard/OpenFOAM/gerhard-7/run/meshing/meshManipulation/exportedVTK/<i class="arr" style="border-width:5px 4px 0"></i></span>
    <svg width="126" height="26" fill="none" style="margin-top:-2px"><g stroke-linecap="round"><path d="M20 7l-6 6 6 6" stroke="#a5a29e" stroke-width="3.500"/><path d="M20 7l-6 6 6 6" stroke="#d4d2cf" stroke-width="1.500"/><path d="M45 7l6 6-6 6" stroke="#a5a29e" stroke-width="3.500"/><path d="M45 7l6 6-6 6" stroke="#d4d2cf" stroke-width="1.500"/><path d="M72 16l6-6 6 6" stroke="#d3521c" stroke-width="3.500"/><path d="M72 15.500l6-6 6 6" stroke="#ee9355" stroke-width="1.300"/></g></svg>
  </div>
  <div class="d-flex" style="padding:6px 11px 0;gap:4px">
    <div style="width:448px">
      <div class="pane" style="height:173px;padding-top:1px"><div class="it"><svg width="24" height="22"><use href="#folder"/></svg><span>Home</span></div></div>
      <div class="d-flex justify-content-center" style="height:4px"><i class="grip" style="width:18px;height:3px"></i></div>
      <div class="pane" style="height:172px;padding-top:1px"><div class="it"><svg width="24" height="22"><use href="#folder"/></svg><span style="letter-spacing:.2px">exportedVTK</span></div><div class="it"><svg width="24" height="22"><use href="#folder"/></svg><span>meshManipulation</span></div><div class="it"><svg width="24" height="22"><use href="#folder"/></svg><span>vtkMeshes</span></div><div class="it"><svg width="24" height="22"><use href="#folder"/></svg><span>vtk</span></div><div class="it"><svg width="24" height="22"><use href="#folder"/></svg><span>post</span></div></div>
    </div>
    <div style="width:798px">
      <div class="pane" style="height:287px"><div class="thead d-flex align-items-center"><span class="d-flex align-items-center h-100 border-end" style="width:397px;padding:0 0 2px 2px">Filename<i class="arr" style="border-width:5px 4px 0;margin-right:4px;top:0"></i></span><span style="padding:0 0 2px 3px">Type</span></div></div>
      <div class="d-flex align-items-center" style="margin-top:6px"><span style="width:93px;padding-bottom:1px">File name:</span><span class="ctl fld" style="width:613px;padding-left:2px;letter-spacing:.08px">exportedLegacyVTK</span><span class="ctl okb justify-content-center ms-auto" style="width:80px">OK</span></div>
      <div class="d-flex align-items-center" style="margin-top:6px"><span style="width:93px;padding-bottom:1px;letter-spacing:-.15px">Files of type:</span><span class="ctl" style="width:619px;padding-left:4px;letter-spacing:.1px">Legacy VTK Files(*.vtk )<i class="arr" style="border-width:5px 4px 0"></i></span><span class="ctl justify-content-center ms-auto" style="width:80px">Cancel</span></div>
    </div>
  </div>
  <svg class="position-absolute" style="right:10px;top:41px" width="58" height="26" fill="none"><use href="#folder" x="6" y="4" width="17" height="17"/><path d="M18 12h3v3h3v3h-3v3h-3v-3h-3v-3h3z" fill="#82b848" stroke="#3f7320"/><rect x="33.500" y="1.500" width="23" height="22" rx="2.500" fill="#f8f7f5" stroke="#b0ada9"/><circle cx="45" cy="12.500" r="6.300" stroke="#8b98a3" stroke-width="3" stroke-dasharray="2.600 2.350"/><circle cx="45" cy="12.500" r="5" fill="#d9e0e6" stroke="#8b98a3"/><circle cx="45" cy="12.500" r="1.800" fill="#fff" stroke="#8b98a3"/></svg>
</div>

<script>
// Mesh space: x grows 1.6333 per pixel, y grows 3 per pixel, origin at (780,250).
const X=x=>780+x/1.6333, Y=y=>250+y/3, L=y=>y+1170;
const P=a=>a.map(p=>X(p[0]).toFixed(1)+','+Y(p[1]).toFixed(1)).join(' ');
const outer=[[750,109],[882,125],[1020,169],[1142,236],[1255,322],[1357,438],[1440,576],[1503,735],[1536,909],[1536,1105],[1497,1293],[1412,1490],[1285,1657],[1114,1786],[922,1863],[707,1882],[498,1838],[302,1732],[158,1596],[50,1440],[-30,1250],[-50,1050],[-30,850],[30,640],[130,420],[257,288],[372,207],[491,152],[622,118]];
const inner=[[748,203],[862,217],[984,257],[1092,310],[1190,385],[1270,490],[1338,607],[1387,747],[1410,895],[1404,1058],[1368,1210],[1300,1370],[1190,1500],[1045,1608],[888,1663],[711,1678],[547,1645],[385,1545],[260,1430],[180,1300],[120,1150],[110,1000],[120,850],[160,660],[220,480],[330,350],[421,289],[523,240],[638,211]];
const n=outer.length, bottom=15;
const at=(i,t)=>{i%=n;return [outer[i][0]+(inner[i][0]-outer[i][0])*t/5,outer[i][1]+(inner[i][1]-outer[i][1])*t/5]};
let s='';
const poly=(a,f)=>s+=`<polygon points="${P(a)}" fill="${f}"/>`;
const lo=a=>a.map(p=>[p[0],L(p[1])]);
const body=[[15,440],[35,600],[60,760],[97,1035],[160,1223],[252,1393],[275,1425],[1200,1425],[1278,1309],[1356,1114],[1401,875],[1440,616],[1480,310],[1525,0],[1000,-100]];
poly(lo(body),'#444547');
poly(lo([[1412,320],[1318,638],[1209,943],[1083,1217],[1125,1361],[1145,1425],[1200,1425],[1278,1309],[1356,1114],[1401,875],[1440,616],[1480,310],[1525,0]]),'#4a4a4b');
poly(lo([[922,693],[824,910],[1009,863]]),'#414043');
poly(outer,'#9f9b94');
poly(inner,'#444548');
poly([[1300,560],[1338,607],[1387,747],[1410,895],[1404,1058],[1368,1210],[1300,1370],[1200,1000]],'#2a2a2b');
poly([[380,1540],[547,1645],[711,1678],[888,1663],[1045,1608],[1190,1500],[700,1400]],'#7d7c76');
let d='';
const ln=(a,b)=>d+=`M${X(a[0]).toFixed(1)} ${Y(a[1]).toFixed(1)}L${X(b[0]).toFixed(1)} ${Y(b[1]).toFixed(1)}`;
for(let i=0;i<n;i++){
  for(let t=0;t<=5;t++) ln(at(i,t),at(i+1,t));
  ln(at(i,0),at(i,5));
  for(let t=0;t<5;t++) i<bottom?ln(at(i,t+1),at(i+1,t)):ln(at(i,t),at(i+1,t+1));
}
const seg=(str,f)=>str.trim().split(/\s+/).forEach(c=>{const v=c.split(/[,;]/).map(Number);for(let k=0;k+3<v.length;k+=2)ln([v[k],f(v[k+1])],[v[k+2],f(v[k+3])])});
seg('415,315;421,289;428,315 506,315;523,240;546,315 609,315;638,211;664,315 719,315;748,203;780,315 837,315;862,217;888,315 964,315;984,257;995,315 1338,607;1340,875;1336,1190 1387,747;1340,875;1376,1027;1387,747 1376,1027;1410,895 1336,1140;1376,1027;1378,1190 1336,1140;1350,1250',y=>y);
seg('520,440;520,462 520,440;547,475;555,440 580,440;582,480 595,440;613,488;640,440 655,440;690,500;705,440 730,440;752,503;770,440 797,440;821,497;840,440 865,440;880,493;893,440 920,440;925,480 970,440;977,462;985,440',L);
seg(`60,715;112,771;188,754;319,793;498,668
107,980;142,972;220,993;336,1005;469,965;642,928;824,910;1009,863;1175,776;1318,638;1421,485;1488,270
178,1168;246,1192;349,1185;494,1199;609,1121;760,1119;912,1057;1059,1041;1209,943;1336,797;1427,616;1440,616
252,1393;362,1370;480,1415 494,1199;680,1308;898,1272;1083,1217;1231,1095;1339,942;1397,828
1032,1415;1125,1361;1254,1220;1343,1060;1401,875;1427,616
302,562;319,793;158,440;188,754;95,477;83,575;188,754 95,477;150,440 83,575;112,771 35,500;83,575 22,440;83,575 15,440;35,500;60,715;62,800;97,1035 30,440;95,477 35,500;112,771
302,562;158,426
319,793;469,965;498,668;642,928;707,712;824,910;922,693;1009,863;1114,616;1175,776;1285,487;1318,638;1412,320;1421,485;1497,123;1480,310
319,793;336,1005;188,754;220,993;112,771;142,972;60,715;107,980;178,1168;142,972;246,1192;220,993;349,1185;336,1005;494,1199;469,965;609,1121;642,928;760,1119;824,910;912,1057;1009,863;1059,1041;1175,776;1209,943;1318,638;1336,797;1421,485;1427,616
107,980;97,1035;160,1223;178,1168;252,1393 107,980;160,1223;252,1393;246,1192;362,1370;349,1185;531,1415 142,972;178,1168 494,1199;547,1415 609,1121;680,1308;760,1119;898,1272;912,1057 898,1272;1059,1041;1083,1217;1209,943;1231,1095;1336,797;1339,942;1427,616;1397,828
252,1393;270,1415 362,1370;367,1415 362,1370;390,1415 582,1415;680,1308;733,1415 822,1415;898,1272;950,1415 986,1415;1083,1217;1125,1361;1231,1095;1254,1220;1339,942;1343,1060;1397,828;1401,875
1103,1415;1125,1361;1145,1415 1188,1415;1254,1220;1278,1309;1343,1060;1356,1114;1401,875 1206,1415;1278,1309;1356,1114 1525,0;1480,310;1440,616;1401,875
60,760;107,980 18,460;60,715 60,715;97,1035 1397,828;1440,616 1497,123;1510,90`,L);
s+=`<path d="${d}" fill="none" stroke="#050060" stroke-width="1" stroke-opacity=".85"/>`;
s+=`<g fill="none" stroke-width="1.300"><path d="M620.500 1001v-40" stroke="#0a9a10"/><path d="M620.500 1001l46 15" stroke="#a8a410"/><path d="M620.500 1001l-26 33" stroke="#9a1010"/></g>
<path d="M620.500 949l5.500 12q-5.500 4-11 0z" fill="#0a960e"/><path d="M679 1020l-15-8v8.500z" fill="#b0ac10"/><path d="M589 1040l2-11q5-3 9 3-1 3-4 4z" fill="#a00a0a"/>
<g fill="none" stroke="#b4b4b8" stroke-width="1.500"><path d="M624 947h10l-9 13h10M669 1004l5.500 6.500v7M680 1004l-5.500 6.500M599 1018l11 14M610 1018l-11 14"/></g>`;
document.getElementById('mesh').innerHTML=s;
</script>
</body>
</html>
